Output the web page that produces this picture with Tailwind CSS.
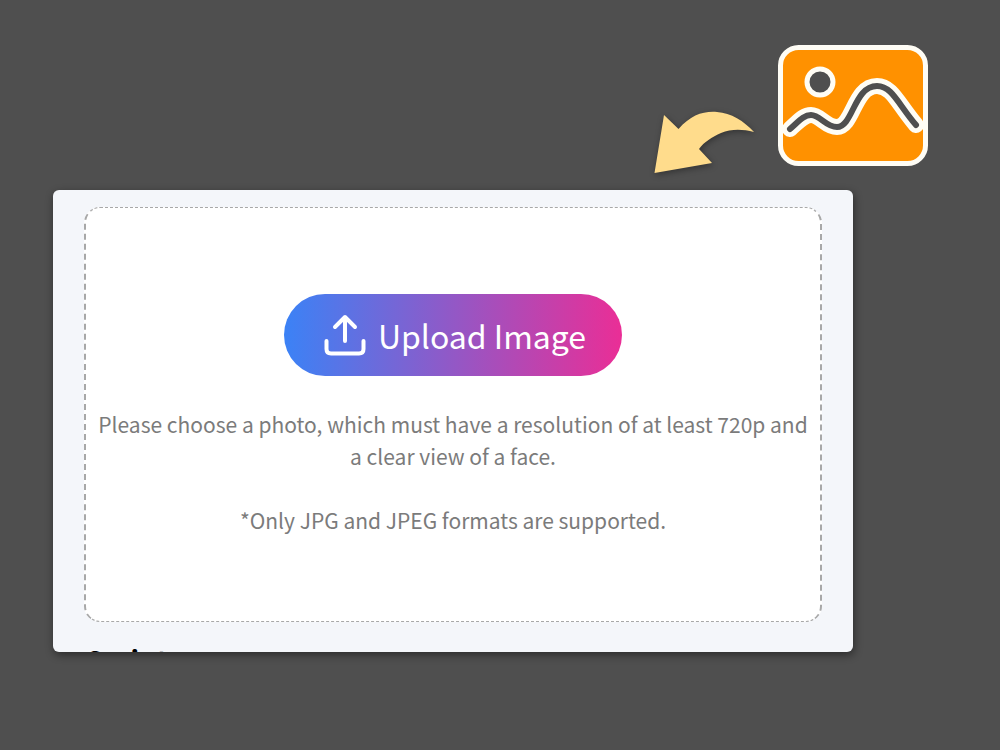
<!DOCTYPE html>
<html lang="en">
<head>
    <meta charset="UTF-8">
    <meta name="viewport" content="width=device-width, initial-scale=1.0">
    <title>Upload Image</title>
    <script src="https://cdn.jsdelivr.net/npm/@tailwindcss/browser@4"></script>
</head>
<body class="min-h-screen bg-[#4f4f4f] font-['Noto_Sans_CJK_SC',sans-serif]">
    <header class="flex justify-end items-start gap-5 pt-11 pr-[71px] pb-2">
        <!-- Arrow pointing at the upload card -->
        <svg class="mt-14 w-[110px] h-[82px] drop-shadow-[1px_2px_3px_rgba(0,0,0,0.35)]" viewBox="0 0 110 82" fill="#ffdc8c" aria-hidden="true">
            <path d="M7.500 73 L17 15 L31.500 29 C44 15 56 11 70 12 C84 13 97 21 107 32 C95 29 84 29 74 33 C65 37 57 42 52 49 L65 63 Z"/>
        </svg>
        <svg class="w-[152px] h-[123px]" viewBox="0 0 152 123" fill="none" aria-hidden="true">
            <rect x="3.500" y="3.500" width="145" height="116" rx="18" fill="#ff9100" stroke="#fffdf5" stroke-width="5"/>
            <circle cx="43" cy="38" r="13" fill="#4f4f4f" stroke="#fffdf5" stroke-width="5"/>
            <g stroke-linecap="round" stroke-linejoin="round">
                <path d="M13 85 C22 77 27 71 34 71 C43 71 49 83 60 83 C76 83 77 42 100 42 C115 42 121 60 139 81" stroke="#fffdf5" stroke-width="16"/>
                <path d="M13 85 C22 77 27 71 34 71 C43 71 49 83 60 83 C76 83 77 42 100 42 C115 42 121 60 139 81" stroke="#4f4f4f" stroke-width="6"/>
            </g>
        </svg>
    </header>

    <main class="ml-[53px] w-4/5 max-h-[462px] overflow-hidden rounded-md bg-[#f4f6fa] px-[31px] pt-[17px] shadow-[1px_3px_9px_rgba(0,0,0,0.45)]">
        <section class="flex flex-col items-center rounded-2xl border-x-2 border-y border-dashed border-[#a8a8a8] bg-white px-2 pt-[86px] pb-[85px] text-center">
            <button type="button" class="flex h-[82px] items-center gap-3 rounded-full bg-linear-to-r/srgb from-[#3b82f6] to-[#ea2e96] pl-10 pr-9 text-[32px] text-white">
                <svg class="w-[42px] h-[42px]" viewBox="0 0 42 42" fill="none" stroke="currentColor" stroke-width="4" stroke-linecap="round" stroke-linejoin="round" aria-hidden="true">
                    <path d="M2.500 27 V35 Q2.500 39.500 7 39.500 H35 Q39.500 39.500 39.500 35 V27"/>
                    <path d="M21 27 V3 M11 13 L21 3 L31 13"/>
                </svg>
                Upload Image
            </button>
            <p class="mt-8 text-[21px] leading-8 text-[#7b7b7b]">Please choose a photo, which must have a resolution of at least 720p and a clear view of a face.</p>
            <p class="mt-8 text-[21px] leading-8 text-[#7b7b7b]">*Only JPG and JPEG formats are supported.</p>
        </section>
        <!-- Next section starts below the fold of the card -->
        <h2 class="mt-5 pl-0.5 text-[28px] leading-9 font-bold text-black">Script</h2>
    </main>
</body>
</html>
